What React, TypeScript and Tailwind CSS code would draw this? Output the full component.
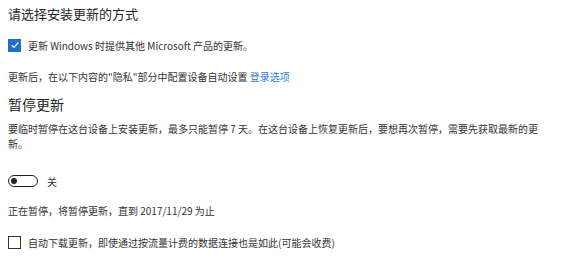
export default function App() {
  return (
    <div className="w-[563px] h-[261px] bg-white overflow-hidden font-['Noto_Sans_CJK_SC',sans-serif] text-[#333]">
      <div className="flex flex-col pl-[8px] pt-[5px]">
        <h2 className="text-[13px] leading-[18px] text-[#262626]">请选择安装更新的方式</h2>

        {/* 勾选项 */}
        <label className="mt-[15px] flex items-center gap-[7px] h-[14px] text-[10px]">
          <span className="w-[13px] h-[13px] bg-[#1f70c8] flex items-center justify-center">
            <svg viewBox="0 0 12 12" className="w-[10px] h-[10px]">
              <path d="M2 6.3 L4.8 9 L10 3" fill="none" stroke="white" strokeWidth="1.4" />
            </svg>
          </span>
          <span>更新 Windows 时提供其他 Microsoft 产品的更新。</span>
        </label>

        <p className="mt-[18px] text-[10px] leading-[14px]">
          更新后，在以下内容的"隐私"部分中配置设备自动设置 <span className="text-[#2f7fd0]">登录选项</span>
        </p>

        <h3 className="mt-[10px] text-[14px] leading-[20px] text-[#262626]">暂停更新</h3>
        <p className="mt-[7px] w-[548px] text-[10px] leading-[15px]">
          要临时暂停在这台设备上安装更新，最多只能暂停 7 天。在这台设备上恢复更新后，要想再次暂停，需要先获取最新的更新。
        </p>

        {/* 开关 */}
        <div className="mt-[23px] flex items-center gap-[9px] h-[14px] text-[10px]">
          <span className="w-[30px] h-[12px] rounded-full border-[1.5px] border-[#222] flex items-center pl-[2px]">
            <span className="w-[6px] h-[6px] rounded-full bg-[#222]" />
          </span>
          <span>关</span>
        </div>

        <p className="mt-[16px] text-[10px] leading-[14px]">正在暂停，将暂停更新，直到 2017/11/29 为止</p>

        <label className="mt-[17px] flex items-center gap-[7px] h-[14px] text-[10px]">
          <span className="w-[13px] h-[13px] border-[1.5px] border-[#333]" />
          <span>自动下载更新，即使通过按流量计费的数据连接也是如此(可能会收费)</span>
        </label>
      </div>
    </div>
  )
}
